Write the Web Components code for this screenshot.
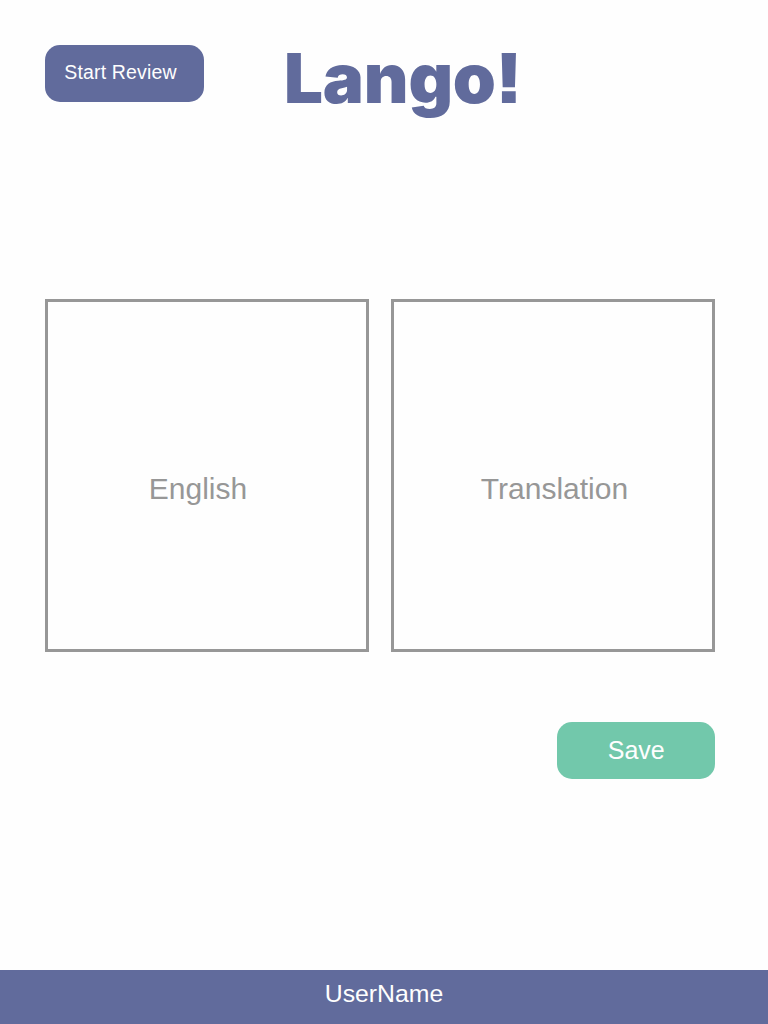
<!DOCTYPE html>
<html lang="en">
<head>
<meta charset="utf-8">
<title>Lango!</title>
<style>
html, body { margin: 0; height: 100%; background: #fefefe; font-family: "Liberation Sans", Arial, sans-serif; }
</style>
</head>
<body>
<lango-page>
  <lango-button slot="header" style="--fs:19.5px;--ls:.15px;--pad:0 8px 2px 0">Start Review</lango-button>
  <lango-logo slot="header">Lango!</lango-logo>
  <lango-card slot="cards" style="--right:18px">English</lango-card>
  <lango-card slot="cards" style="--left:3px">Translation</lango-card>
  <lango-button slot="actions" style="--w:158.5px;--bg:#72c8ab;--fs:25px;--pad:0 0 0 1px">Save</lango-button>
  <span slot="footer">UserName</span>
</lango-page>
<script>
const define = (name, html) => customElements.define(name, class extends HTMLElement {
  constructor() {
    super();
    this.attachShadow({ mode: "open" }).innerHTML = html;
  }
});
define("lango-button", `<style>
:host { display: block; width: var(--w, 159px); height: 57px; flex: none; }
button { box-sizing: border-box; width: 100%; height: 100%; border: 0; border-radius: 15px; display: flex; align-items: center; justify-content: center; padding: var(--pad); background: var(--bg, #616b9c); color: #fefefe; font: var(--fs) "Liberation Sans", Arial, sans-serif; letter-spacing: var(--ls, 0); white-space: nowrap; }
</style><button><slot></slot></button>`);
define("lango-logo", `<style>
:host { display: block; margin-left: 80px; }
h1 { margin: 0; font: 900 69px/67px Inter, sans-serif; font-feature-settings: "ss07"; letter-spacing: -.2px; color: #616b9c; white-space: nowrap; }
</style><h1><slot></slot></h1>`);
define("lango-card", `<style>
:host { box-sizing: border-box; display: flex; align-items: center; justify-content: center; border: 3px solid #979797; color: #979797; font-size: 30px; }
span { padding: 27px var(--right, 0) 0 var(--left, 0); }
</style><span><slot></slot></span>`);
define("lango-page", `<style>
:host { display: flex; flex-direction: column; height: 1024px; width: 768px; overflow: hidden; }
header { display: flex; align-items: flex-start; padding: 45px 45px 0; box-sizing: border-box; flex: 0 0 299px; }
main { flex: 1; }
.cards { display: grid; grid-template-columns: 324px 324px; gap: 22px; height: 353px; padding-left: 45px; }
.actions { display: flex; justify-content: flex-end; padding: 70px 53px 0 0; }
footer { height: 54px; background: #616b9c; color: #fefefe; display: flex; justify-content: center; align-items: center; font-size: 24.8px; box-sizing: border-box; padding-bottom: 7px; }
</style>
<header><slot name="header"></slot></header>
<main><div class="cards"><slot name="cards"></slot></div><div class="actions"><slot name="actions"></slot></div></main>
<footer><slot name="footer"></slot></footer>`);
</script>
</body>
</html>
